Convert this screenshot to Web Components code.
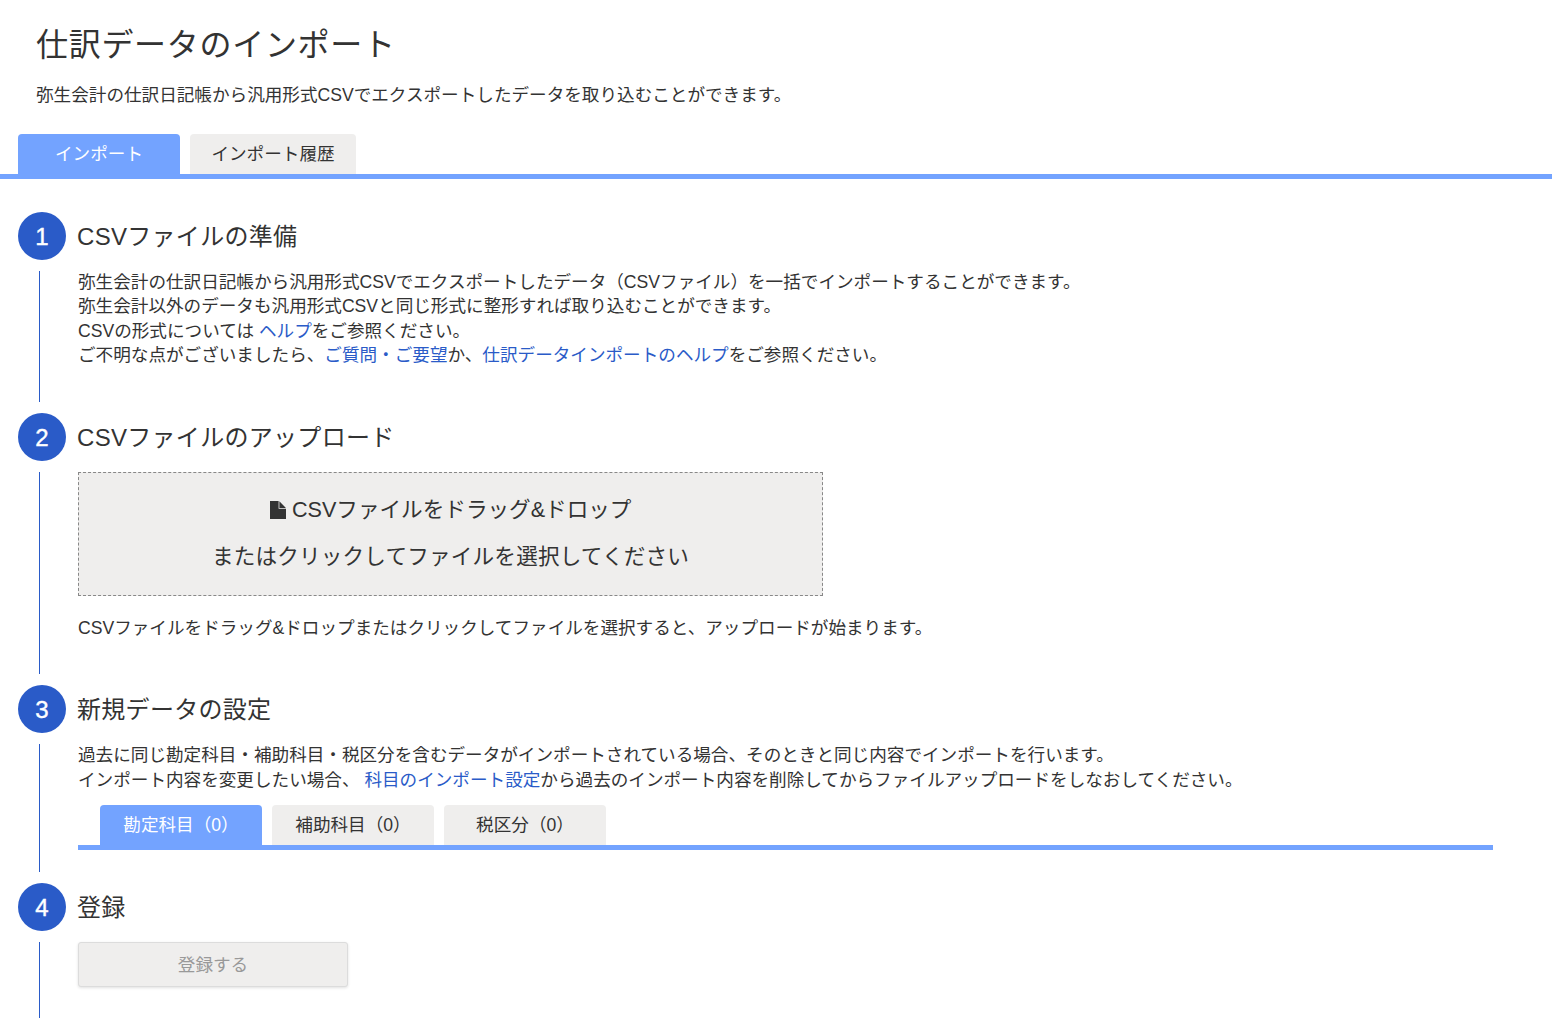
<!DOCTYPE html>
<html lang="ja"><head><meta charset="utf-8"><title>仕訳データのインポート</title>
<style>
html,body{margin:0;padding:0;background:#fff;height:1018px;overflow:hidden}
body{font-family:"Liberation Sans","Noto Sans CJK JP",sans-serif;color:#333;font-size:17.6px;line-height:24.4px}
a{color:#2a5bc8;text-decoration:none}
</style></head><body>
<template id="t-header"><style>
:host{display:block;padding:0 36px}
h1{margin:0;padding-top:24px;font-size:32px;line-height:43px;font-weight:400;color:#333;letter-spacing:.7px}
p{margin:0;padding-top:16px;font-size:17.6px;line-height:24px}
</style><h1><slot name="title"></slot></h1><p><slot></slot></p></template>

<template id="t-tabs"><style>
:host{display:flex;gap:10px;border-bottom:5px solid var(--blue,#73a3ff);height:40px;padding-left:var(--tabs-left,18px)}
</style><slot></slot></template>

<template id="t-tab"><style>
:host{display:flex;align-items:center;justify-content:center;height:40px;box-sizing:border-box;width:var(--w,162px);background:#efeeed;color:#333;border-radius:4px 4px 0 0;font-size:17.6px;white-space:nowrap}
:host([active]){background:#73a3ff;color:#fff}
</style><slot></slot></template>

<template id="t-step"><style>
:host{display:block;margin-left:18px}
.head{display:flex;align-items:center;gap:11px;height:48px;margin-bottom:11px}
.num{box-sizing:border-box;padding-top:2px;width:48px;height:48px;flex:none;border-radius:50%;background:#2a5bc8;color:#fff;display:flex;align-items:center;justify-content:center;font-size:24px;font-family:"Liberation Sans",sans-serif;-webkit-text-stroke:.4px #fff}
h2{margin:0;padding-top:2px;font-size:24px;font-weight:400;line-height:32px;color:#333;letter-spacing:.3px}
.body{display:flow-root;margin-left:21px;border-left:1px solid #2a5bc8;padding-left:38px;margin-bottom:11px}
</style><div class="head"><div class="num"></div><h2><slot name="title"></slot></h2></div><div class="body"><slot></slot></div></template>

<template id="t-drop"><style>
:host{display:flex;flex-direction:column;align-items:center;justify-content:center;box-sizing:border-box;padding-bottom:2px;width:745px;height:124px;background:#efeeed;border:1px dashed #888;font-size:21.6px;line-height:47px;color:#333}
svg{width:16px;height:18.5px;fill:#333;vertical-align:-2px;margin-right:6.4px}
.second{letter-spacing:.18px}
</style><div><svg viewBox="0 0 16 18.5"><path d="M0 0H8.6V7.8H16V18.5H0Z"/><path d="M9.4 0.3 15.9 6.9H9.4Z"/></svg><slot name="first"></slot></div><div class="second"><slot></slot></div></template>

<template id="t-btn"><style>
:host{display:flex;align-items:center;justify-content:center;box-sizing:border-box;padding-top:2px;width:270px;height:45px;background:#efeeed;border:1px solid #dcdcdc;border-radius:3px;box-shadow:0 1px 3px rgba(0,0,0,.12);color:#999;font-size:17.6px}
</style><slot></slot></template>

<page-header><span slot="title">仕訳データのインポート</span>弥生会計の仕訳日記帳から汎用形式CSVでエクスポートしたデータを取り込むことができます。</page-header>
<tab-bar style="margin:27px 0 33px"><tab-item active>インポート</tab-item><tab-item style="--w:166px">インポート履歴</tab-item></tab-bar>

<step-block n="1"><span slot="title">CSVファイルの準備</span>
<div style="margin-top:-1px;padding-bottom:34.4px">弥生会計の仕訳日記帳から汎用形式CSVでエクスポートしたデータ（CSVファイル）を一括でインポートすることができます。<br>弥生会計以外のデータも汎用形式CSVと同じ形式に整形すれば取り込むことができます。<br>CSVの形式については <a href="#">ヘルプ</a>をご参照ください。<br>ご不明な点がございましたら、<a href="#">ご質問・ご要望</a>か、<a href="#">仕訳データインポートのヘルプ</a>をご参照ください。</div>
</step-block>

<step-block n="2"><span slot="title">CSVファイルのアップロード</span>
<drop-zone><span slot="first">CSVファイルをドラッグ&amp;ドロップ</span>またはクリックしてファイルを選択してください</drop-zone>
<div style="padding:20px 0 33.6px">CSVファイルをドラッグ&amp;ドロップまたはクリックしてファイルを選択すると、アップロードが始まります。</div>
</step-block>

<step-block n="3"><span slot="title">新規データの設定</span>
<div style="margin-top:-.6px">過去に同じ勘定科目・補助科目・税区分を含むデータがインポートされている場合、そのときと同じ内容でインポートを行います。<br>インポート内容を変更したい場合、 <a href="#">科目のインポート設定</a>から過去のインポート内容を削除してからファイルアップロードをしなおしてください。</div>
<tab-bar style="margin-top:12.8px;width:1393px;--tabs-left:22px"><tab-item active>勘定科目（0）</tab-item><tab-item>補助科目（0）</tab-item><tab-item>税区分（0）</tab-item></tab-bar>
<div style="height:22px"></div>
</step-block>

<step-block n="4"><span slot="title">登録</span>
<register-button>登録する</register-button>
<div style="height:60px"></div>
</step-block>

<script>
function def(tag,tpl,init){customElements.define(tag,class extends HTMLElement{
 constructor(){super();this.attachShadow({mode:"open"}).appendChild(document.getElementById(tpl).content.cloneNode(true));}
 connectedCallback(){if(init)init(this);}
});}
def("page-header","t-header");
def("tab-bar","t-tabs");
def("tab-item","t-tab");
def("drop-zone","t-drop");
def("register-button","t-btn");
def("step-block","t-step",el=>{el.shadowRoot.querySelector(".num").textContent=el.getAttribute("n");});
</script>
</body></html>
